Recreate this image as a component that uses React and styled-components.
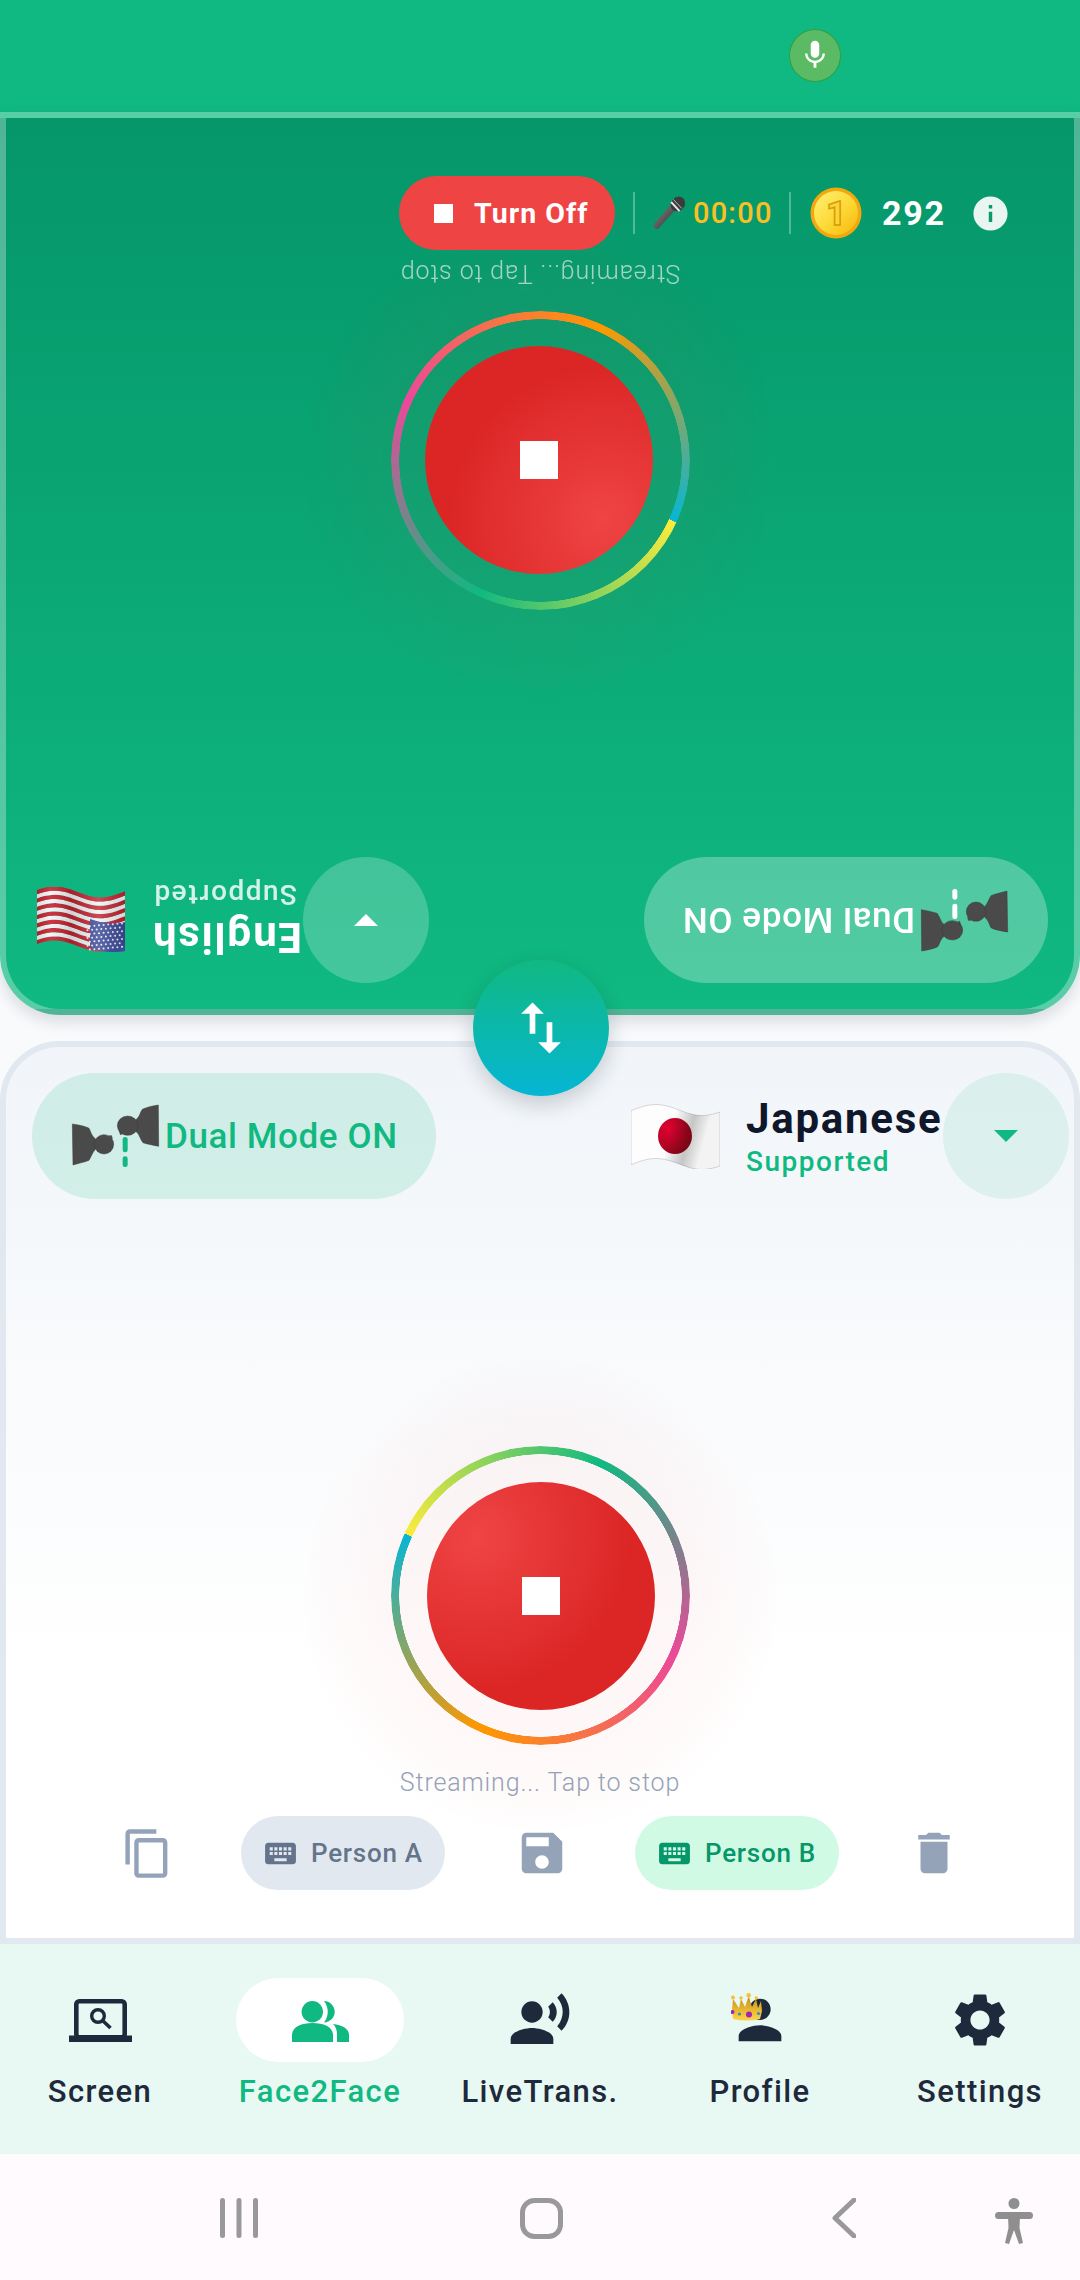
import React from "react";
import styled, { createGlobalStyle } from "styled-components";
import {
  MdContentCopy,
  MdSave,
  MdDelete,
  MdKeyboard,
  MdSettings,
  MdRecordVoiceOver,
  MdPerson,
  MdSwapVert,
  MdInfo,
  MdMic,
} from "react-icons/md";

const Global = createGlobalStyle`
  html, body { margin: 0; padding: 0; background: #f8fafc; }
  body { font-family: Roboto, "Noto Sans", sans-serif; }
  * { box-sizing: border-box; }
`;

const Page = styled.div`
  position: relative;
  width: 1080px;
  height: 2280px;
  overflow: hidden;
  display: flex;
  flex-direction: column;
  background: #f8fafc;
`;

const TopBar = styled.div`
  height: 112px;
  flex: none;
  background: #10b981;
  display: flex;
  align-items: center;
  padding: 0 0 2px 789px;
`;

const MicDot = styled.div`
  width: 52px;
  height: 53px;
  border-radius: 50%;
  background: #5bbb64;
  border: 1px solid #2ea043;
  color: #fff;
  display: flex;
  align-items: center;
  justify-content: center;
  font-size: 34px;
`;

const TopPanel = styled.section`
  height: 903px;
  flex: none;
  display: flex;
  flex-direction: column;
  align-items: center;
  padding-top: 58px;
  border: 6px solid rgba(255, 255, 255, 0.3);
  border-radius: 0 0 60px 60px;
  background: linear-gradient(180deg, #059669 0%, #10b981 100%);
  background-clip: border-box;
  box-shadow: 0 6px 16px rgba(15, 23, 42, 0.14);
  position: relative;
  z-index: 1;
`;

const BottomPanel = styled.section`
  height: 903px;
  flex: none;
  margin-top: 26px;
  display: flex;
  flex-direction: column;
  align-items: center;
  padding-top: 26px;
  border: 6px solid #e2e8f0;
  border-radius: 60px 60px 0 0;
  background: linear-gradient(180deg, #f1f5f9 0%, #ffffff 70%);
`;

const StatusRow = styled.div`
  align-self: stretch;
  height: 74px;
  flex: none;
  display: flex;
  align-items: center;
  padding-left: 393px;
`;

const TurnOff = styled.div`
  width: 216px;
  height: 74px;
  border-radius: 37px;
  background: #ef4444;
  color: #fff;
  display: flex;
  align-items: center;
  padding-left: 35px;
  gap: 21px;
  font-size: 28.5px;
  font-weight: 700;
  letter-spacing: 1.05px;
  white-space: nowrap;
`;

const StopGlyph = styled.span`
  width: 19px;
  height: 19px;
  background: #fff;
  flex: none;
`;

const Divider = styled.span`
  width: 2px;
  height: 42px;
  background: rgba(255, 255, 255, 0.3);
  flex: none;
  margin-left: ${(p) => p.$ml}px;
`;

const Timer = styled.span`
  color: #fbbf24;
  font-size: 29px;
  font-weight: 500;
  letter-spacing: 1.2px;
  margin-left: 7px;
  width: 84px;
  white-space: nowrap;
`;

const CoinCount = styled.span`
  color: #fff;
  font-size: 34px;
  font-weight: 700;
  letter-spacing: 1.7px;
  margin-left: 20px;
  width: 71px;
`;

const InfoIcon = styled(MdInfo)`
  color: #e8f5f1;
  font-size: 41px;
  margin-left: 17px;
  flex: none;
`;

const Caption = styled.div`
  height: 34px;
  line-height: 34px;
  flex: none;
  font-size: 25px;
  font-weight: 300;
  letter-spacing: 0.87px;
  white-space: nowrap;
  color: ${(p) => (p.$flip ? "rgba(255,255,255,0.62)" : "#94a3b8")};
  transform: ${(p) => (p.$flip ? "rotate(180deg)" : "none")};
  margin-top: ${(p) => p.$mt}px;
`;

const RingWrap = styled.div`
  position: relative;
  width: 299px;
  height: 299px;
  flex: none;
  display: flex;
  align-items: center;
  justify-content: center;
  margin-top: ${(p) => p.$mt}px;
  transform: ${(p) => (p.$flip ? "rotate(180deg)" : "none")};
`;

const Glow = styled.div`
  position: absolute;
  inset: -90px;
  border-radius: 50%;
  background: radial-gradient(
    circle closest-side,
    rgba(239, 68, 68, 0.045) 60%,
    rgba(239, 68, 68, 0.015) 90%,
    transparent 100%
  );
`;

const RingStroke = styled.div`
  position: absolute;
  inset: 0;
  border-radius: 50%;
  background: conic-gradient(
    from 294.5deg,
    #ffeb3b 0%,
    #10b981 25%,
    #ec4899 50%,
    #ff9800 75%,
    #06b6d4 100%
  );
  -webkit-mask: radial-gradient(
    circle closest-side,
    transparent calc(100% - 8.5px),
    #000 calc(100% - 8px)
  );
  mask: radial-gradient(
    circle closest-side,
    transparent calc(100% - 8.5px),
    #000 calc(100% - 8px)
  );
`;

const RedDisc = styled.div`
  position: relative;
  width: 228px;
  height: 228px;
  margin-left: 2px;
  border-radius: 50%;
  background: radial-gradient(circle at 22% 24%, #ef4444 0%, #dc2626 62%);
  display: flex;
  align-items: center;
  justify-content: center;
`;

const StopSquare = styled.span`
  width: 38px;
  height: 38px;
  background: #fff;
`;

const SelectorRow = styled.div`
  align-self: stretch;
  height: 126px;
  flex: none;
  display: flex;
  align-items: center;
  justify-content: space-between;
  padding: 0 ${(p) => p.$pr}px 0 26px;
  margin-top: ${(p) => (p.$flip ? "auto" : "0")};
  margin-bottom: ${(p) => (p.$flip ? "26px" : "0")};
  transform: ${(p) => (p.$flip ? "rotate(180deg)" : "none")};
`;

const DualPill = styled.div`
  width: 404px;
  height: 126px;
  border-radius: 63px;
  padding-left: 39px;
  display: flex;
  align-items: center;
  gap: 5px;
  background: ${(p) => (p.$flip ? "rgba(255,255,255,0.28)" : "rgba(16,185,129,0.15)")};
  color: ${(p) => (p.$flip ? "#fff" : "#10b981")};
  font-size: 35px;
  font-weight: 500;
  letter-spacing: 0.6px;
  white-space: nowrap;
`;

const LangGroup = styled.div`
  display: flex;
  flex-direction: ${(p) => (p.$reverse ? "row-reverse" : "row")};
  align-items: center;
  height: 126px;
`;

const LangText = styled.div`
  display: flex;
  flex-direction: column;
  width: ${(p) => p.$w}px;
  margin: ${(p) => p.$m};
`;

const LangName = styled.span`
  font-size: 42px;
  font-weight: 700;
  line-height: 48px;
  letter-spacing: 1.75px;
  margin-top: 1px;
  color: ${(p) => (p.$flip ? "#fff" : "#0f172a")};
  white-space: nowrap;
`;

const LangSub = styled.span`
  font-size: 28px;
  font-weight: 500;
  line-height: 34px;
  letter-spacing: 1.5px;
  margin-top: 2px;
  margin-left: ${(p) => (p.$flip ? "5px" : "0")};
  color: ${(p) => (p.$flip ? "rgba(255,255,255,0.82)" : "#10b981")};
  white-space: nowrap;
`;

const CaretButton = styled.div`
  width: 126px;
  height: 126px;
  border-radius: 50%;
  flex: none;
  display: flex;
  align-items: center;
  justify-content: center;
  background: ${(p) => (p.$flip ? "rgba(255,255,255,0.22)" : "rgba(16,185,129,0.1)")};
`;

const Caret = styled.span`
  width: 0;
  height: 0;
  border-left: 12.5px solid transparent;
  border-right: 12.5px solid transparent;
  border-top: 12.5px solid ${(p) => (p.$flip ? "#fff" : "#10b981")};
`;

const SwapButton = styled.div`
  position: absolute;
  left: 473px;
  top: 960px;
  width: 136px;
  height: 136px;
  border-radius: 50%;
  z-index: 3;
  display: flex;
  align-items: center;
  justify-content: center;
  color: #fff;
  font-size: 68px;
  background: linear-gradient(180deg, #10b981 0%, #06b6d4 100%);
  box-shadow: 0 8px 22px rgba(15, 23, 42, 0.2);
`;

const ActionRow = styled.div`
  align-self: stretch;
  flex: none;
  height: 74px;
  margin-top: 16px;
  display: grid;
  grid-template-columns: repeat(5, 197px);
  justify-content: center;
  justify-items: center;
  align-items: center;
`;

const IconAction = styled.div`
  display: flex;
  color: #94a3b8;
  font-size: ${(p) => p.$size}px;
  padding-left: ${(p) => p.$pl || 0}px;
`;

const PersonPill = styled.div`
  width: 204px;
  height: 74px;
  border-radius: 37px;
  display: flex;
  align-items: center;
  padding-left: 21px;
  gap: 12px;
  font-size: 26px;
  font-weight: 500;
  letter-spacing: 0.75px;
  white-space: nowrap;
  background: ${(p) => (p.$active ? "#d1fae5" : "#e2e8f0")};
  color: ${(p) => (p.$active ? "#059669" : "#64748b")};
  svg { font-size: 37px; flex: none; }
`;

const BottomNav = styled.nav`
  height: 210px;
  flex: none;
  background: #e8f8f3;
  display: grid;
  grid-template-columns: repeat(5, 200px);
  justify-content: space-between;
  padding-top: 34px;
  align-content: start;
`;

const NavItem = styled.div`
  display: flex;
  flex-direction: column;
  align-items: center;
  color: ${(p) => (p.$active ? "#10b981" : "#1e293b")};
`;

const NavIconBox = styled.div`
  position: relative;
  width: 168px;
  height: 84px;
  border-radius: 42px;
  display: flex;
  align-items: center;
  justify-content: center;
  font-size: 64px;
  background: ${(p) => (p.$active ? "#fff" : "transparent")};
`;

const NavLabel = styled.span`
  margin-top: 12px;
  font-size: 31px;
  line-height: 36px;
  font-weight: 500;
  letter-spacing: 1.4px;
  white-space: nowrap;
`;

const CrownBadge = styled.svg`
  position: absolute;
  left: 55px;
  top: 15px;
  width: 31px;
  height: 28px;
`;

const SystemBar = styled.div`
  height: 126px;
  flex: none;
  background: #fefafe;
  display: flex;
  align-items: flex-start;
  padding: 44px 0 0 220px;
`;

const SysIcon = styled.svg`
  flex: none;
  margin-left: ${(p) => p.$ml}px;
  display: block;
`;

/* ---------- drawings ---------- */

const wave = (u) => -5.5 * Math.cos((2 * Math.PI * (u - 0.28)) / 1.04);

function strip(w, h, v0, v1, pad = 6) {
  const N = 24;
  const pts = [];
  for (let i = 0; i <= N; i++) {
    const u = i / N;
    pts.push(`${(u * w).toFixed(1)},${(pad + wave(u) + v0 * h).toFixed(1)}`);
  }
  for (let i = N; i >= 0; i--) {
    const u = i / N;
    pts.push(`${(u * w).toFixed(1)},${(pad + wave(u) + v1 * h).toFixed(1)}`);
  }
  return pts.join(" ");
}

function UsFlag() {
  const w = 88;
  const h = 54;
  const stripes = Array.from({ length: 13 }, (_, i) => i);
  const stars = [];
  for (let r = 0; r < 7; r++) {
    for (let c = 0; c < 8; c++) {
      const x = 3 + c * 4.6 + (r % 2 ? 2.3 : 0);
      const y = 3 + r * 3.9 + (x / 36) * -3;
      stars.push(<circle key={`${r}-${c}`} cx={x} cy={y + 2.4} r="1" fill="#f4f2fb" />);
    }
  }
  return (
    <svg width={w} height={h + 11} viewBox={`0 0 ${w} ${h + 11}`} style={{ flex: "none" }}>
      <defs>
        <linearGradient id="usShade" x1="0" x2="1" y1="0" y2="0">
          <stop offset="0" stopColor="#000" stopOpacity="0.12" />
          <stop offset="0.3" stopColor="#fff" stopOpacity="0.18" />
          <stop offset="0.62" stopColor="#000" stopOpacity="0.14" />
          <stop offset="0.85" stopColor="#fff" stopOpacity="0.1" />
          <stop offset="1" stopColor="#000" stopOpacity="0.1" />
        </linearGradient>
      </defs>
      {stripes.map((i) => (
        <polygon
          key={i}
          points={strip(w, h, i / 13, (i + 1) / 13)}
          fill={i % 2 ? "#f5f3f5" : "#c8202f"}
        />
      ))}
      <path d="M0 1 C10 -1 24 0 35 4 L35 33 C24 29 10 27 0 30 Z" fill="#3c4a99" />
      {stars}
      <polygon points={strip(w, h, 0, 1)} fill="url(#usShade)" />
    </svg>
  );
}

function JpFlag() {
  const w = 89;
  const h = 54;
  return (
    <svg width={w} height={h + 11} viewBox={`0 0 ${w} ${h + 11}`} style={{ flex: "none" }}>
      <defs>
        <radialGradient id="jpRed" cx="0.3" cy="0.3" r="0.9">
          <stop offset="0" stopColor="#e0002f" />
          <stop offset="1" stopColor="#8a0a18" />
        </radialGradient>
        <linearGradient id="jpShade" x1="0" x2="1" y1="0" y2="0.2">
          <stop offset="0.5" stopColor="#000" stopOpacity="0" />
          <stop offset="0.72" stopColor="#000" stopOpacity="0.22" />
          <stop offset="0.9" stopColor="#000" stopOpacity="0.04" />
        </linearGradient>
      </defs>
      <polygon points={strip(w, h, 0, 1)} fill="#fdfdfd" stroke="#c9ccd0" strokeWidth="0.8" />
      <ellipse cx="44" cy="32" rx="17" ry="18" fill="url(#jpRed)" />
      <polygon points={strip(w, h, 0, 1)} fill="url(#jpShade)" />
    </svg>
  );
}

function DualIcon({ dash }) {
  return (
    <svg width="89" height="64" viewBox="36 30 267 192" style={{ flex: "none" }}>
      <g fill="#4a4a4a" stroke="#3a3a3a" strokeWidth="1.5">
        <path d="M40 90 C60 93 80 97 90 103 C95 110 96 125 110 135 L110 165 C100 175 96 190 90 199 C75 205 55 209 42 213 Z" />
        <circle cx="135" cy="151" r="29" />
        <path d="M150 125 L158 125 L160 135 Z" />
        <path d="M298 33 C280 36 262 40 250 46 C243 55 243 68 230 78 L230 112 C242 120 244 138 252 146 C268 151 285 154 299 157 Z" />
        <ellipse cx="206" cy="95" rx="31" ry="29" />
        <path d="M180 108 L190 120 L184 122 Z" />
      </g>
      <rect x="191" y="129" width="15" height="46" rx="7" fill={dash} />
      <rect x="191" y="187" width="15" height="32" rx="7" fill={dash} />
    </svg>
  );
}

function MicEmoji() {
  return (
    <svg width="33" height="34" viewBox="36 48 102 104" style={{ flex: "none", marginLeft: 18 }}>
      <defs>
        <linearGradient id="micBody" x1="0" x2="1" y1="0" y2="1">
          <stop offset="0" stopColor="#8a8a8a" />
          <stop offset="1" stopColor="#2c2c2c" />
        </linearGradient>
      </defs>
      <path d="M38 135 L92 72 L108 88 L52 149 C46 152 36 145 38 135 Z" fill="url(#micBody)" />
      <ellipse cx="113" cy="72" rx="21" ry="24" transform="rotate(42 113 72)" fill="#3b3b3b" />
      <path d="M92 66 L118 94" stroke="#e6e6e6" strokeWidth="6" />
      <path d="M99 58 L125 86" stroke="#bbbbbb" strokeWidth="3" />
    </svg>
  );
}

function Coin() {
  return (
    <svg width="52" height="52" viewBox="0 0 52 52" style={{ flex: "none", marginLeft: 19 }}>
      <defs>
        <linearGradient id="coinFace" x1="0" x2="1" y1="0" y2="1">
          <stop offset="0" stopColor="#fff176" />
          <stop offset="0.55" stopColor="#fdd835" />
          <stop offset="1" stopColor="#f5b60a" />
        </linearGradient>
      </defs>
      <circle cx="26" cy="26" r="25.5" fill="#f2a80f" />
      <circle cx="26" cy="26" r="22" fill="url(#coinFace)" />
      <text
        x="26"
        y="38"
        textAnchor="middle"
        fontFamily="Roboto, sans-serif"
        fontWeight="900"
        fontSize="34"
        fill="#fbd33a"
        stroke="#d99a06"
        strokeWidth="1.5"
      >
        1
      </text>
    </svg>
  );
}

function LaptopSearch() {
  return (
    <svg width="63" height="43" viewBox="0 0 63 43" fill="none">
      <rect x="7.3" y="2.3" width="48.4" height="36" rx="3" stroke="#1e293b" strokeWidth="4.6" />
      <rect x="0" y="36.5" width="63" height="6.5" fill="#1e293b" />
      <circle cx="29" cy="17" r="6.3" stroke="#1e293b" strokeWidth="3.4" />
      <path d="M33.5 21.5 L41.5 29" stroke="#1e293b" strokeWidth="3.6" />
    </svg>
  );
}

function PeopleIcon() {
  return (
    <svg width="59" height="43" viewBox="0 0 59 43" fill="#10b981">
      <circle cx="21.3" cy="12.7" r="10.7" />
      <path d="M1 43 V36 C1 28 10 24 21.5 24 C33 24 42 28 42 36 V43 Z" />
      <path d="M33 2 A10.6 10.6 0 1 1 33 23.4 C38 17 38 8.5 33 2 Z" />
      <path d="M42 25 C52 26 58 30 58 36 V43 H46 V36 C46 31 45 28 42 25 Z" />
    </svg>
  );
}

function Crown() {
  return (
    <CrownBadge viewBox="0 0 31 28">
      <defs>
        <linearGradient id="crownGold" x1="0" x2="0" y1="0" y2="1">
          <stop offset="0" stopColor="#c98f14" />
          <stop offset="1" stopColor="#ffd54a" />
        </linearGradient>
      </defs>
      <path
        d="M2 26 L1 17 L2 6 L8 15 L10 6 L14 14 L17.7 3 L21 14 L25 6 L27 15 L30 8 L31 18 L29 26 Q16 29 2 26 Z"
        fill="url(#crownGold)"
      />
      <g fill="#f6c12f">
        <circle cx="2" cy="4.5" r="2" />
        <circle cx="10" cy="5" r="1.7" />
        <circle cx="17.7" cy="2.2" r="2.2" />
        <circle cx="25.3" cy="5" r="1.7" />
      </g>
      <g fill="#9c27b0">
        <circle cx="1.5" cy="19" r="2" />
        <circle cx="18" cy="21.5" r="3" />
      </g>
      <g fill="#2f8fc4">
        <circle cx="8.5" cy="21" r="1.6" />
        <circle cx="27.5" cy="20.5" r="1.6" />
      </g>
    </CrownBadge>
  );
}

function StreamRing({ flip, mt }) {
  return (
    <RingWrap $flip={flip} $mt={mt}>
      <Glow />
      <RingStroke />
      <RedDisc>
        <StopSquare />
      </RedDisc>
    </RingWrap>
  );
}

const navItems = [
  { label: "Screen", icon: <LaptopSearch /> },
  { label: "Face2Face", icon: <PeopleIcon />, active: true },
  { label: "LiveTrans.", icon: <MdRecordVoiceOver /> },
  { label: "Profile", icon: <MdPerson />, crown: true },
  { label: "Settings", icon: <MdSettings /> },
];

export default function App() {
  return (
    <Page>
      <Global />
      <TopBar>
        <MicDot>
          <MdMic />
        </MicDot>
      </TopBar>

      <TopPanel>
        <StatusRow>
          <TurnOff>
            <StopGlyph />
            Turn Off
          </TurnOff>
          <Divider $ml={18} />
          <MicEmoji />
          <Timer>00:00</Timer>
          <Divider $ml={12} />
          <Coin />
          <CoinCount>292</CoinCount>
          <InfoIcon />
        </StatusRow>
        <Caption $flip $mt={6}>
          Streaming... Tap to stop
        </Caption>
        <StreamRing flip mt={21} />
        <SelectorRow $flip $pr={31}>
          <DualPill $flip>
            <DualIcon dash="#fff" />
            Dual Mode ON
          </DualPill>
          <LangGroup $reverse>
            <UsFlag />
            <LangText $w={146} $m="0 31px 0 1px">
              <LangName $flip>English</LangName>
              <LangSub $flip>Supported</LangSub>
            </LangText>
            <CaretButton $flip>
              <Caret $flip />
            </CaretButton>
          </LangGroup>
        </SelectorRow>
      </TopPanel>

      <BottomPanel>
        <SelectorRow $pr={5}>
          <DualPill>
            <DualIcon dash="#10b981" />
            Dual Mode ON
          </DualPill>
          <LangGroup>
            <JpFlag />
            <LangText $w={197} $m="0 0 0 26px">
              <LangName>Japanese</LangName>
              <LangSub>Supported</LangSub>
            </LangText>
            <CaretButton>
              <Caret />
            </CaretButton>
          </LangGroup>
        </SelectorRow>
        <StreamRing mt={247} />
        <Caption $mt={21}>Streaming... Tap to stop</Caption>
        <ActionRow>
          <IconAction $size={53} $pl={3}>
            <MdContentCopy />
          </IconAction>
          <PersonPill>
            <MdKeyboard />
            Person A
          </PersonPill>
          <IconAction $size={54} $pl={4}>
            <MdSave />
          </IconAction>
          <PersonPill $active>
            <MdKeyboard />
            Person B
          </PersonPill>
          <IconAction $size={54}>
            <MdDelete />
          </IconAction>
        </ActionRow>
      </BottomPanel>

      <SwapButton>
        <MdSwapVert />
      </SwapButton>

      <BottomNav>
        {navItems.map((n) => (
          <NavItem key={n.label} $active={n.active}>
            <NavIconBox $active={n.active}>
              {n.icon}
              {n.crown && <Crown />}
            </NavIconBox>
            <NavLabel>{n.label}</NavLabel>
          </NavItem>
        ))}
      </BottomNav>

      <SystemBar>
        <SysIcon width="38" height="40" viewBox="0 0 38 40" $ml={0}>
          <g fill="#999">
            <rect x="0" y="0" width="5" height="40" rx="2.5" />
            <rect x="16.5" y="0" width="5" height="40" rx="2.5" />
            <rect x="33" y="0" width="5" height="40" rx="2.5" />
          </g>
        </SysIcon>
        <SysIcon width="43" height="41" viewBox="0 0 43 41" $ml={262}>
          <rect x="2.5" y="2.5" width="38" height="36" rx="12" fill="none" stroke="#999" strokeWidth="5" />
        </SysIcon>
        <SysIcon width="24" height="40" viewBox="0 0 24 40" $ml={269}>
          <path d="M22 2 L3 20 L22 38" fill="none" stroke="#999" strokeWidth="5" strokeLinecap="round" strokeLinejoin="round" />
        </SysIcon>
        <SysIcon width="38" height="46" viewBox="0 0 38 46" $ml={139}>
          <g fill="#8f8f8f">
            <circle cx="19" cy="5.5" r="5.5" />
            <rect x="0" y="14" width="38" height="7" rx="3.5" />
            <path d="M13 18 H25 L24.5 30 L28 45 L24 46 L19 32 L14 46 L10 45 L13.5 30 Z" />
          </g>
        </SysIcon>
      </SystemBar>
    </Page>
  );
}
